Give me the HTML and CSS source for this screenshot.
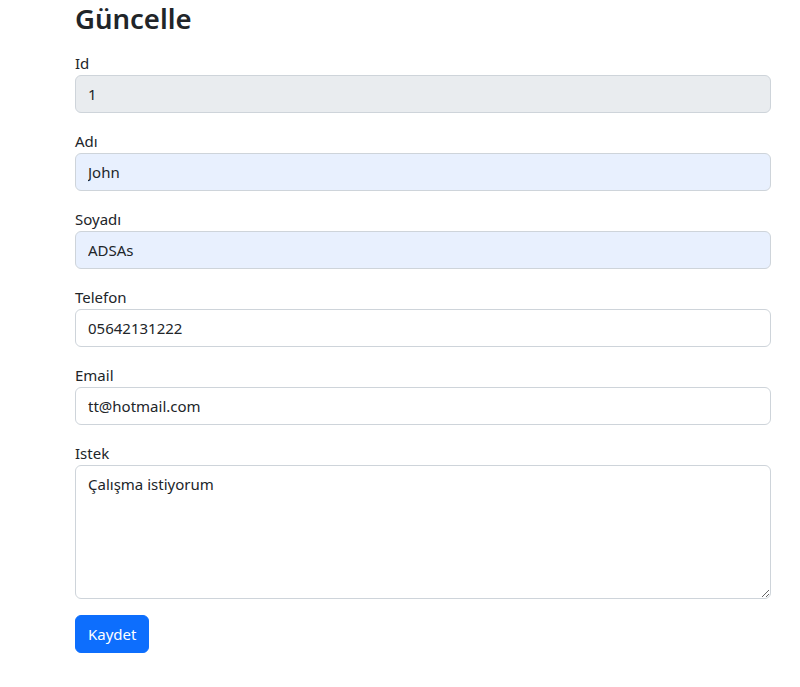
FILE: index.html
```html
<!DOCTYPE html>
<html lang="tr">
<head>
<meta charset="utf-8">
<title>Güncelle</title>
<link rel="stylesheet" href="styles.css">
</head>
<body>
<div class="container">
  <h2 class="title">Güncelle</h2>
  <form class="form">
    <div class="group">
      <label class="label" for="id">Id</label>
      <input class="control readonly" id="id" type="text" value="1" readonly>
    </div>
    <div class="group">
      <label class="label" for="ad">Adı</label>
      <input class="control autofill" id="ad" type="text" value="John">
    </div>
    <div class="group">
      <label class="label" for="soyad">Soyadı</label>
      <input class="control autofill" id="soyad" type="text" value="ADSAs">
    </div>
    <div class="group">
      <label class="label" for="tel">Telefon</label>
      <input class="control" id="tel" type="text" value="05642131222">
    </div>
    <div class="group">
      <label class="label" for="email">Email</label>
      <input class="control" id="email" type="text" value="tt@hotmail.com">
    </div>
    <div class="group">
      <label class="label" for="istek">Istek</label>
      <textarea class="control area" id="istek" rows="5">Çalışma istiyorum</textarea>
    </div>
    <button class="btn" type="button">Kaydet</button>
  </form>
</div>
</body>
</html>
```
FILE: styles.css
```css
* { box-sizing: border-box; }
html, body { margin: 0; padding: 0; }
body {
  font-family: "Noto Sans", "Open Sans", sans-serif;
  font-size: 16px;
  line-height: 1.5;
  color: #212529;
  background: #fff;
}
.container {
  width: 696px;
  margin-left: 75px;
}
.title {
  margin: 0 0 16px;
  padding-top: 2px;
  font-size: 27.5px;
  font-weight: 600;
  line-height: 1.2;
  color: #212529;
}
.group { margin-bottom: 16px; }
.label {
  display: block;
  font-size: 15px;
  line-height: 24px;
}
.control {
  display: block;
  width: 100%;
  height: 38px;
  padding: 6px 12px;
  font-family: inherit;
  font-size: 15px;
  line-height: 24px;
  color: #212529;
  background: #fff;
  border: 1px solid #ced4da;
  border-radius: 6px;
  outline: none;
}
.readonly { background: #e9ecef; }
.autofill { background: #e8f0fe; }
.area { height: 134px; resize: vertical; }
.btn {
  display: inline-block;
  height: 38px;
  padding: 6px 12px;
  font-family: inherit;
  font-size: 15px;
  line-height: 24px;
  color: #fff;
  background: #0d6efd;
  border: 1px solid #0d6efd;
  border-radius: 6px;
}
```
